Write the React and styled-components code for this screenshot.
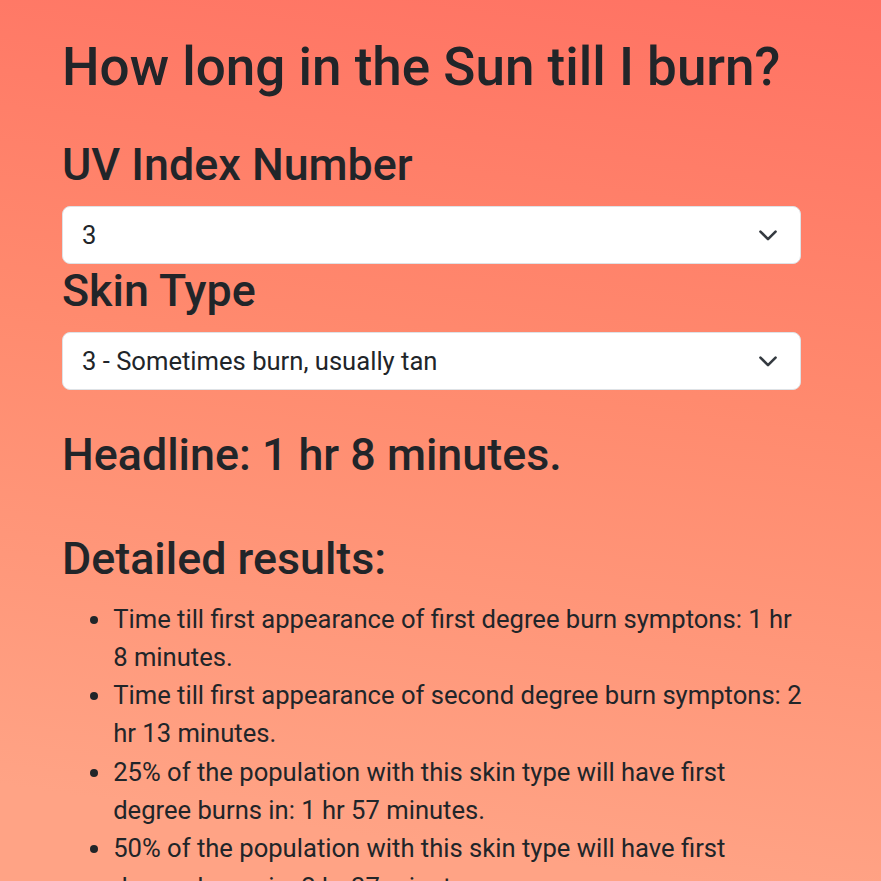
import React from "react";
import styled, { createGlobalStyle } from "styled-components";

const Global = createGlobalStyle`
  html, body {
    margin: 0;
    padding: 0;
  }
  body {
    font-family: Roboto, "Liberation Sans", Arial, sans-serif;
    color: #212529;
    background: linear-gradient(188deg, #ff7263 0px, #ff8a6e 420px, #ffa385 900px);
    background-repeat: no-repeat;
    min-height: 881px;
  }
`;

const Page = styled.main`
  width: 739px;
  padding: 34px 0 40px 62px;
  box-sizing: content-box;
`;

const Title = styled.h1`
  margin: 0 0 37px;
  font-size: 53px;
  font-weight: 500;
  line-height: 67px;
  white-space: nowrap;
`;

const Heading = styled.h3`
  margin: ${(p) => p.$mt || 0}px 0 ${(p) => p.$mb ?? 14}px;
  font-size: 44.8px;
  font-weight: 500;
  line-height: 1.2;
`;

const SelectWrap = styled.div`
  position: relative;
  width: 100%;
`;

const Select = styled.select`
  display: block;
  width: 100%;
  height: 58px;
  box-sizing: border-box;
  appearance: none;
  -webkit-appearance: none;
  background: #fff;
  border: 1px solid #dee2e6;
  border-radius: 8px;
  padding: 0 58px 0 19px;
  font-family: Roboto, "Liberation Sans", Arial, sans-serif;
  font-size: 25.6px;
  color: #212529;
  outline: none;
`;

const Chevron = styled.svg`
  position: absolute;
  right: 22px;
  top: 50%;
  transform: translateY(-50%);
  width: 22px;
  height: 16.5px;
  pointer-events: none;
`;

const List = styled.ul`
  margin: 0 -4px 0 0;
  padding-left: 51.2px;
  font-size: 25.6px;
  line-height: 38.3px;
`;

const Item = styled.li`
  padding-left: 0;
`;

function Dropdown({ value, options }) {
  return (
    <SelectWrap>
      <Select defaultValue={value}>
        {options.map((o) => (
          <option key={o} value={o}>
            {o}
          </option>
        ))}
      </Select>
      <Chevron viewBox="0 0 16 12" aria-hidden="true">
        <path
          d="M2.5 3.5l5.5 5.5 5.5-5.5"
          fill="none"
          stroke="#343a40"
          strokeWidth="1.9"
          strokeLinecap="round"
          strokeLinejoin="round"
        />
      </Chevron>
    </SelectWrap>
  );
}

export default function App() {
  const uv = ["1", "2", "3", "4", "5", "6", "7", "8", "9", "10", "11"];
  const skins = [
    "1 - Always burn, never tan",
    "2 - Usually burn, sometimes tan",
    "3 - Sometimes burn, usually tan",
    "4 - Rarely burn, always tan",
    "5 - Very rarely burn",
    "6 - Never burn",
  ];
  return (
    <>
      <Global />
      <Page>
        <Title>How long in the Sun till I burn?</Title>
        <Heading>UV Index Number</Heading>
        <Dropdown value="3" options={uv} />
        <Heading>Skin Type</Heading>
        <Dropdown value="3 - Sometimes burn, usually tan" options={skins} />
        <Heading $mt={38.5} $mb={50}>Headline: 1 hr 8 minutes.</Heading>
        <Heading $mb={14}>Detailed results:</Heading>
        <List>
          <Item>Time till first appearance of first degree burn symptons: 1 hr 8 minutes.</Item>
          <Item>Time till first appearance of second degree burn symptons: 2 hr 13 minutes.</Item>
          <Item>25% of the population with this skin type will have first degree burns in: 1 hr 57 minutes.</Item>
          <Item>50% of the population with this skin type will have first degree burns in: 2 hr 37 minutes.</Item>
          <Item>75% of the population with this skin type will have first degree burns in: 3 hr 16 minutes.</Item>
        </List>
      </Page>
    </>
  );
}
